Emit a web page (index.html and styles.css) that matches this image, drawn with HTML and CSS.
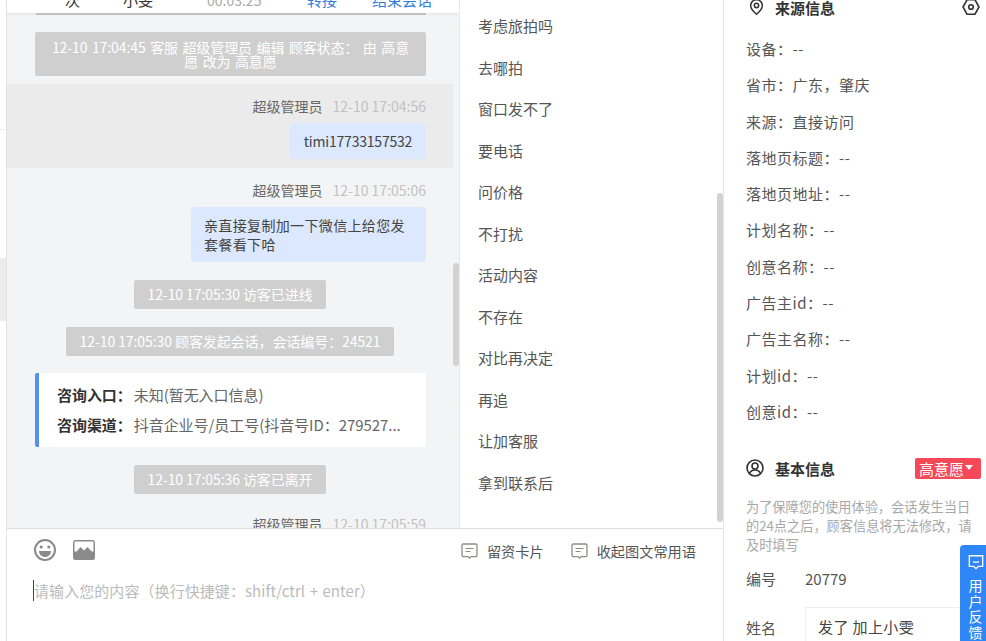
FILE: index.html
```html
<!DOCTYPE html>
<html lang="zh-CN">
<head>
<meta charset="utf-8">
<title>会话</title>
<link rel="stylesheet" href="styles.css">
</head>
<body>
<div class="app">
  <aside class="rail">
    <div class="rail-top"></div>
    <div class="rail-item"></div>
    <div class="rail-active"></div>
  </aside>
  <main class="chat">
    <div class="chat-body">
      <section class="messages">
        <header class="call-bar">
          <span class="c1">次</span><span class="c2">小雯</span><span class="c3">00:03:25</span><span class="c4">转接</span><span class="c5">结束会话</span>
        </header>
        <div class="call-rule"></div>
        <div class="sys sys-wide">12-10 17:04:45 客服 超级管理员 编辑 顾客状态： 由 高意愿 改为 高意愿</div>
        <div class="msg msg-hl">
          <div class="meta"><span class="who">超级管理员</span><span class="when">12-10 17:04:56</span></div>
          <div class="bubble">timi17733157532</div>
        </div>
        <div class="msg">
          <div class="meta"><span class="who">超级管理员</span><span class="when">12-10 17:05:06</span></div>
          <div class="bubble bubble-long">亲直接复制加一下微信上给您发套餐看下哈</div>
        </div>
        <div class="sys sys-a">12-10 17:05:30 访客已进线</div>
        <div class="sys sys-b">12-10 17:05:30 顾客发起会话，会话编号：24521</div>
        <div class="card">
          <p class="card-row"><b>咨询入口：</b><span>未知(暂无入口信息)</span></p>
          <p class="card-row"><b>咨询渠道：</b><span>抖音企业号/员工号(抖音号ID：279527...</span></p>
        </div>
        <div class="sys sys-c">12-10 17:05:36 访客已离开</div>
        <div class="msg msg-last">
          <div class="meta"><span class="who">超级管理员</span><span class="when">12-10 17:05:59</span></div>
        </div>
        <div class="scroll scroll-msg"></div>
      </section>
      <section class="phrases">
        <ul class="phrase-list">
          <li>考虑旅拍吗</li><li>去哪拍</li><li>窗口发不了</li><li>要电话</li><li>问价格</li><li>不打扰</li><li>活动内容</li><li>不存在</li><li>对比再决定</li><li>再追</li><li>让加客服</li><li>拿到联系后</li>
        </ul>
        <div class="scroll scroll-phrase"></div>
      </section>
    </div>
    <footer class="composer">
      <div class="tools">
        <svg class="tool-icon" viewBox="0 0 24 24" width="24" height="24"><circle cx="12" cy="12" r="10" fill="none" stroke="#8a8a8a" stroke-width="2"/><circle cx="8.2" cy="9" r="1.6" fill="#8a8a8a"/><circle cx="15.8" cy="9" r="1.6" fill="#8a8a8a"/><path d="M6 13h12c0 3.6-2.7 6-6 6s-6-2.400-6-6z" fill="#8a8a8a"/></svg>
        <svg class="tool-icon tool-img" viewBox="0 0 24 24" width="24" height="24"><rect x="1" y="2" width="22" height="20" rx="2.500" fill="#8a8a8a"/><rect x="2.500" y="3.500" width="19" height="10" fill="#fff"/><path d="M2.500 16l6-7 3.500 3.500 3.500-3.500 6 6.500v2h-19z" fill="#8a8a8a"/></svg>
        <span class="tool-spacer"></span>
        <span class="tool-link tool-link-a"><svg viewBox="0 0 17 16" width="17" height="16"><path d="M2.300 1h12.400a1.300 1.300 0 0 1 1.300 1.300v10a1.300 1.300 0 0 1-1.300 1.300h-4.700l-1.500 1.500-1.500-1.500H2.300A1.300 1.300 0 0 1 1 12.300v-10A1.300 1.300 0 0 1 2.300 1z" fill="none" stroke="#8f8a86" stroke-width="1.300"/><path d="M4.500 5.500h8M4.500 8.500h5" stroke="#8f8a86" stroke-width="1.200"/></svg>留资卡片</span>
        <span class="tool-link"><svg viewBox="0 0 17 16" width="17" height="16"><path d="M2.300 1h12.400a1.300 1.300 0 0 1 1.300 1.300v10a1.300 1.300 0 0 1-1.300 1.300h-4.700l-1.500 1.500-1.500-1.500H2.300A1.300 1.300 0 0 1 1 12.300v-10A1.300 1.300 0 0 1 2.300 1z" fill="none" stroke="#8f8a86" stroke-width="1.300"/><path d="M4.500 5.500h8M4.500 8.500h5" stroke="#8f8a86" stroke-width="1.200"/></svg>收起图文常用语</span>
      </div>
      <div class="input"><span class="caret"></span>请输入您的内容（换行快捷键：shift/ctrl + enter）</div>
    </footer>
  </main>
  <aside class="info">
    <h2 class="info-head info-head-top">
      <svg class="pin" viewBox="0 0 18 20" width="15" height="18"><path d="M9 1.200a7 7 0 0 0-7 7c0 4.800 7 10.500 7 10.500s7-5.700 7-10.500a7 7 0 0 0-7-7z" fill="none" stroke="#333" stroke-width="1.800"/><circle cx="9" cy="8.200" r="2.600" fill="none" stroke="#333" stroke-width="1.800"/></svg>
      <span>来源信息</span>
      <svg class="hex" viewBox="0 0 18 18" width="18" height="18"><path d="M5 1.800h8l4 7.200-4 7.200H5L1 9z" fill="none" stroke="#333" stroke-width="1.600"/><circle cx="9" cy="9" r="2.300" fill="none" stroke="#333" stroke-width="1.600"/></svg>
    </h2>
    <ul class="fields">
      <li>设备：--</li><li>省市：广东，肇庆</li><li>来源：直接访问</li><li>落地页标题：--</li><li>落地页地址：--</li><li>计划名称：--</li><li>创意名称：--</li><li>广告主id：--</li><li>广告主名称：--</li><li>计划id：--</li><li>创意id：--</li>
    </ul>
    <h2 class="info-head info-head-basic">
      <svg viewBox="0 0 18 18" width="18" height="18"><circle cx="9" cy="9" r="8" fill="none" stroke="#333" stroke-width="1.600"/><circle cx="9" cy="7" r="3" fill="none" stroke="#333" stroke-width="1.600"/><path d="M3.500 14.500c1-2.500 3-3.500 5.500-3.500s4.500 1 5.500 3.500" fill="none" stroke="#333" stroke-width="1.600"/></svg>
      <span>基本信息</span>
      <em class="tag">高意愿<i class="tag-arrow"></i></em>
    </h2>
    <p class="note">为了保障您的使用体验，会话发生当日的24点之后，顾客信息将无法修改，请及时填写</p>
    <div class="form-row form-row-num"><label>编号</label><span>20779</span></div>
    <div class="form-row form-row-name"><label>姓名</label><span class="name-box">发了 加上小雯</span></div>
  </aside>
</div>
<div class="feedback">
  <svg viewBox="0 0 18 18" width="16" height="16"><path d="M1.500 2h15v12h-5l-2.500 2.500L6.500 14h-5z" fill="none" stroke="#fff" stroke-width="1.500"/><path d="M5.500 8.500q3.500 2 7 0" fill="none" stroke="#fff" stroke-width="1.300"/></svg>
  <span class="fb-text">用户反馈</span>
</div>
</body>
</html>
```
FILE: styles.css
```css
* { box-sizing: border-box; }
html, body { margin: 0; padding: 0; height: 100%; overflow: hidden; background: #fff; }
body { font-family: "Noto Sans CJK SC", "Noto Sans", sans-serif; font-size: 14px; color: #555; position: relative; }
ul { list-style: none; margin: 0; padding: 0; }
p, h2 { margin: 0; }

.app { display: flex; height: 641px; }

.rail { width: 7px; flex: none; border-right: 1px solid #e2e2e2; display: flex; flex-direction: column; }
.rail-top { height: 130px; border-bottom: 1px solid #eee; }
.rail-item { height: 128px; }
.rail-active { height: 63px; background: #ececec; }

.chat { width: 717px; flex: none; border-right: 1px solid #e5e5e5; display: flex; flex-direction: column; }
.chat-body { height: 529px; flex: none; display: flex; overflow: hidden; border-bottom: 1px solid #dcdcdc; }

.messages { width: 452px; flex: none; background: #f3f4f6; position: relative; overflow: hidden; }
.call-bar { height: 13px; background: #fff; box-shadow: 0 1px 3px rgba(0,0,0,.08); position: relative; display: flex; align-items: flex-end; overflow: hidden; line-height: 20px; color: #333; font-size: 15px; }
.call-bar span { flex: none; margin-bottom: 3px; }
.c1 { margin-left: 58px; width: 58px; }
.c2 { width: 84px; }
.c3 { width: 100px; color: #aaa; font-size: 14px; }
.c4 { width: 65px; color: #2f7de1; }
.c5 { color: #2f7de1; }
.call-rule { height: 2px; margin: 0 33px 0 29px; background: #c8c8c8; }

.sys { background: #cfcfcf; color: #fff; border-radius: 2px; text-align: center; line-height: 29px; letter-spacing: -.08px; }
.sys-wide { width: 391px; height: 44px; margin: 17px 0 0 28px; padding: 8px 12px 0; line-height: 14px; word-spacing: 1.400px; }
.sys-a { width: 192px; margin: 18px 0 0 127px; }
.sys-b { width: 328px; margin: 18px 0 0 59px; }
.sys-c { width: 192px; margin: 18px 0 0 127px; }

.msg { display: flex; flex-direction: column; align-items: flex-end; padding: 0 33px 0 0; }
.msg-hl { background: #ebebeb; margin-top: 8px; height: 84px; width: 446px; padding: 11px 27px 0 0; }
.msg-hl + .msg { padding-top: 11px; }
.meta { display: flex; gap: 10px; line-height: 22px; white-space: nowrap; }
.who { color: #666; }
.when { color: #c2c2c2; }
.bubble { margin-top: 6px; background: #dce8fd; color: #444; border-radius: 4px; width: 136px; padding: 0; text-align: center; line-height: 36px; letter-spacing: -.2px; }
.bubble-long { width: 235px; padding: 9px 13px 8px; line-height: 19px; text-align: left; letter-spacing: .35px; }

.card { margin: 17px 0 0 28px; width: 391px; height: 74px; background: #fff; border-left: 4px solid #5591ee; border-radius: 2px; padding: 7px 0 0 18px; font-size: 15px; }
.card-row { line-height: 30px; white-space: nowrap; color: #666; letter-spacing: -.05px; }
.card-row b { color: #333; font-weight: 700; margin-right: 2px; }

.msg-last { margin-top: 19px; }

.scroll { position: absolute; width: 6px; background: #d2d2d2; border-radius: 3px; }
.scroll-msg { right: 0; top: 263px; height: 103px; }
.scroll-phrase { right: 0; top: 193px; height: 329px; }

.phrases { flex: 1; background: #fff; border-left: 1px solid #e8e8e8; position: relative; padding: 5px 0 0 18px; }
.phrase-list li { height: 41.500px; line-height: 41.500px; color: #555; font-size: 15px; }

.composer { flex: 1; background: #fff; padding: 0 27px 0 26px; }
.tools { display: flex; align-items: center; height: 41px; }
.tool-icon { display: block; }
.tool-img { margin-left: 15px; }
.tool-spacer { flex: 1; }
.tool-link { display: inline-flex; align-items: center; gap: 9px; color: #555; margin: 2px 0 0 27px; font-size: 14.200px; }
.input { margin-top: 10px; color: #bbb; font-size: 15px; line-height: 22px; position: relative; left: 1px; white-space: nowrap; word-spacing: 1px; letter-spacing: .07px; }
.caret { position: absolute; left: -1px; top: 0; width: 1px; height: 21px; background: #444; }

.info { flex: 1; padding: 0 0 0 22px; min-width: 0; overflow: hidden; font-size: 15px; }
.info-head { display: flex; align-items: center; font-size: 15px; font-weight: 700; color: #333; }
.info-head-top { height: 14px; }
.pin { margin: 0 11px 0 3px; }
.hex { position: absolute; left: 962px; top: -2px; }
.fields { margin-top: 17px; }
.fields li { height: 36.300px; line-height: 36.300px; color: #555; white-space: nowrap; letter-spacing: .5px; }
.info-head-basic { margin-top: 26px; height: 24px; }
.info-head-basic svg { margin-right: 11px; }
.tag { position: absolute; left: 915px; top: 458px; width: 66px; height: 21px; line-height: 21px; background: #f5495a; color: #fff; font-style: normal; font-weight: 400; border-radius: 2px; padding-left: 4px; font-size: 15px; }
.tag-arrow { position: absolute; right: 8px; top: 7px; border: 4px solid transparent; border-top: 5px solid #fff; border-bottom: 0; }
.note { margin-top: 17px; width: 236px; font-size: 13.200px; line-height: 19px; color: #a8a8a8; }
.form-row { display: flex; align-items: center; }
.form-row label { width: 59px; flex: none; }
.form-row-num { margin-top: 14px; line-height: 22px; }
.form-row-name { margin-top: 17px; }
.name-box { display: block; width: 160px; height: 40px; line-height: 38px; padding-left: 12px; border: 1px solid #eee; color: #444; letter-spacing: .4px; }

.feedback { position: absolute; left: 960px; top: 545px; width: 26px; height: 96px; background: #2f86f6; border-radius: 4px 0 0 0; color: #fff; display: flex; flex-direction: column; align-items: center; padding: 9px 0 0 5px; gap: 8px; }
.fb-text { width: 14px; line-height: 15.500px; text-align: center; }
```
